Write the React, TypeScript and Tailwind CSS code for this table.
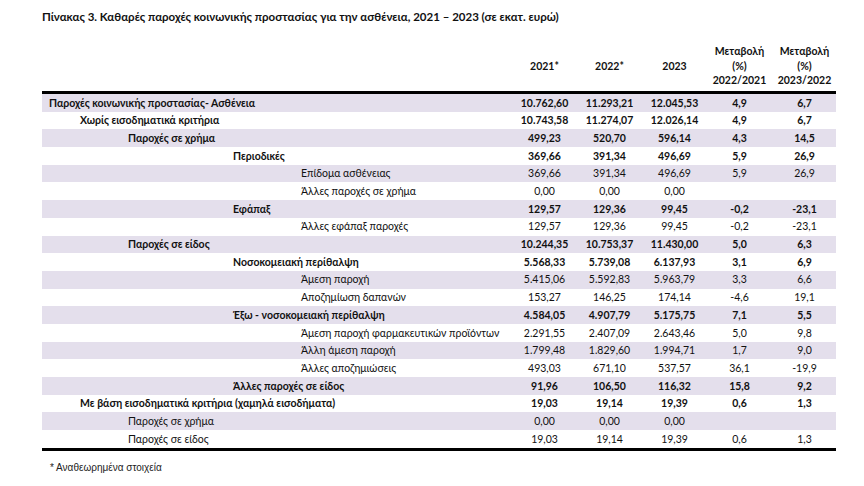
import React from "react";

type Row = {
  label: string;
  indent: number;
  bold?: boolean;
  v: string[];
};

const rows: Row[] = [
  { label: "Παροχές κοινωνικής προστασίας- Ασθένεια", indent: 0, bold: true, v: ["10.762,60", "11.293,21", "12.045,53", "4,9", "6,7"] },
  { label: "Χωρίς εισοδηματικά κριτήρια", indent: 1, bold: true, v: ["10.743,58", "11.274,07", "12.026,14", "4,9", "6,7"] },
  { label: "Παροχές σε χρήμα", indent: 2, bold: true, v: ["499,23", "520,70", "596,14", "4,3", "14,5"] },
  { label: "Περιοδικές", indent: 3, bold: true, v: ["369,66", "391,34", "496,69", "5,9", "26,9"] },
  { label: "Επίδομα ασθένειας", indent: 4, v: ["369,66", "391,34", "496,69", "5,9", "26,9"] },
  { label: "Άλλες παροχές σε χρήμα", indent: 4, v: ["0,00", "0,00", "0,00", "", ""] },
  { label: "Εφάπαξ", indent: 3, bold: true, v: ["129,57", "129,36", "99,45", "-0,2", "-23,1"] },
  { label: "Άλλες εφάπαξ παροχές", indent: 4, v: ["129,57", "129,36", "99,45", "-0,2", "-23,1"] },
  { label: "Παροχές σε είδος", indent: 2, bold: true, v: ["10.244,35", "10.753,37", "11.430,00", "5,0", "6,3"] },
  { label: "Νοσοκομειακή περίθαλψη", indent: 3, bold: true, v: ["5.568,33", "5.739,08", "6.137,93", "3,1", "6,9"] },
  { label: "Άμεση παροχή", indent: 4, v: ["5.415,06", "5.592,83", "5.963,79", "3,3", "6,6"] },
  { label: "Αποζημίωση δαπανών", indent: 4, v: ["153,27", "146,25", "174,14", "-4,6", "19,1"] },
  { label: "Έξω - νοσοκομειακή περίθαλψη", indent: 3, bold: true, v: ["4.584,05", "4.907,79", "5.175,75", "7,1", "5,5"] },
  { label: "Άμεση παροχή φαρμακευτικών προϊόντων", indent: 4, v: ["2.291,55", "2.407,09", "2.643,46", "5,0", "9,8"] },
  { label: "Άλλη άμεση παροχή", indent: 4, v: ["1.799,48", "1.829,60", "1.994,71", "1,7", "9,0"] },
  { label: "Άλλες αποζημιώσεις", indent: 4, v: ["493,03", "671,10", "537,57", "36,1", "-19,9"] },
  { label: "Άλλες παροχές σε είδος", indent: 3, bold: true, v: ["91,96", "106,50", "116,32", "15,8", "9,2"] },
  { label: "Με βάση εισοδηματικά κριτήρια (χαμηλά εισοδήματα)", indent: 1, bold: true, v: ["19,03", "19,14", "19,39", "0,6", "1,3"] },
  { label: "Παροχές σε χρήμα", indent: 2, v: ["0,00", "0,00", "0,00", "", ""] },
  { label: "Παροχές σε είδος", indent: 2, v: ["19,03", "19,14", "19,39", "0,6", "1,3"] },
];

const indentCls = ["pl-[7px]", "pl-[38px]", "pl-[86px]", "pl-[191px]", "pl-[259px]"];

export default function App() {
  return (
    <div className="w-[864px] h-[486px] bg-white text-[#111] font-['Lato',sans-serif] pl-[42px]">
      <div className="pt-[9px] text-[11.5px] font-bold leading-[16px]">
        Πίνακας 3. Καθαρές παροχές κοινωνικής προστασίας για την ασθένεια, 2021 – 2023 (σε εκατ. ευρώ)
      </div>

      <div className="w-[794px] mt-[16px]">
        {/* header */}
        <div className="grid grid-cols-[470px_repeat(5,65px)] h-[50px] items-center text-[10.5px] font-bold text-center leading-[14.5px]">
          <div />
          <div className="pt-[1px]">2021*</div>
          <div className="pt-[1px]">2022*</div>
          <div className="pt-[1px]">2023</div>
          <div>
            Μεταβολή
            <br />
            (%)
            <br />
            2022/2021
          </div>
          <div>
            Μεταβολή
            <br />
            (%)
            <br />
            2023/2022
          </div>
        </div>

        <div className="border-t-[3px] border-b-[3px] border-black">
          {rows.map((r, i) => (
            <div
              key={i}
              className={`grid grid-cols-[470px_repeat(5,65px)] h-[17.7px] items-center text-[10.5px] leading-none ${
                i % 2 === 0 ? "bg-[#e4dfec]" : "bg-white"
              } ${r.bold ? "font-bold" : "font-normal"}`}
            >
              <div className={`${indentCls[r.indent]} whitespace-nowrap`}>{r.label}</div>
              {r.v.map((x, j) => (
                <div key={j} className="text-center">
                  {x}
                </div>
              ))}
            </div>
          ))}
        </div>

        <div className="pt-[9px] pl-[8px] text-[10px] font-['Liberation_Sans',sans-serif] text-[#222]">
          * Αναθεωρημένα στοιχεία
        </div>
      </div>
    </div>
  );
}
